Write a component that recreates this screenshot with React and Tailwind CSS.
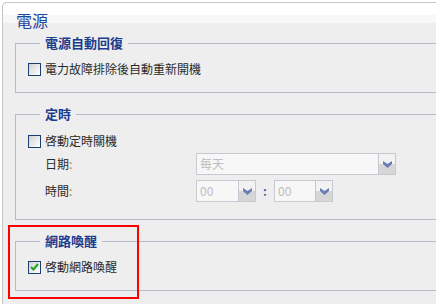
import { useState } from 'react';

const font = { fontFamily: '"Noto Sans CJK TC", "Noto Sans", sans-serif' };

function Checkbox({ checked, onChange }) {
    return (
        <button
            type="button"
            onClick={onChange}
            className="w-[13px] h-[13px] border border-[#1c406e] bg-[linear-gradient(135deg,#d2d2d2,#ffffff)] flex items-center justify-center shrink-0"
        >
            {checked && (
                <svg width="9" height="8" viewBox="0 0 9 8">
                    <path d="M1 4 L3.5 6.5 L8 1" fill="none" stroke="#21a321" strokeWidth="2" />
                </svg>
            )}
        </button>
    );
}

function Arrow() {
    return (
        <div className="w-[17px] self-stretch border-l border-[#c8c8d2] flex flex-col relative">
            <div className="flex-1 bg-[#f2f2f2]" />
            <div className="flex-1 bg-[#d6d6d6]" />
            <svg className="absolute left-[4px] top-[7px]" width="9" height="7" viewBox="0 0 9 7">
                <path d="M0 0 L4.5 3 L9 0 L9 3 L4.5 7 L0 3 Z" fill="#6c7cb4" />
            </svg>
        </div>
    );
}

function Select({ value, width }) {
    return (
        <div className={`${width} h-[22px] border border-[#c9c9d3] bg-[#f7f7f7] flex items-stretch`}>
            <div className="flex-1 flex items-center pl-[3px] text-[12px] text-[#bdbdbd]">{value}</div>
            <Arrow />
        </div>
    );
}

function Group({ title, children, className }) {
    return (
        <fieldset className={`border border-[#b7bbc5] pl-[12px] ${className}`}>
            <legend className="ml-[12px] px-[5px] text-[13px] leading-[16px] font-bold text-[#1b3d8f]">{title}</legend>
            {children}
        </fieldset>
    );
}

export default function App() {
    const [autoRestart, setAutoRestart] = useState(false);
    const [schedule, setSchedule] = useState(false);
    const [wol, setWol] = useState(true);

    return (
        <div className="w-[436px] h-[304px] overflow-hidden bg-white relative" style={font}>
            <div className="ml-[2px] mt-[2px] w-[520px] h-[320px] border-l border-t border-[#c6c6c6] rounded-tl-[5px] bg-[linear-gradient(#ffffff_0,#ffffff_12px,#f7f7f7_12px,#f7f7f7_20px,#eeeeee_20px)]">
                <div className="pl-[13px] pt-[8px] text-[16px] leading-[18px] text-[#2148a0]">電源</div>

                <div className="ml-[12px] mt-[6px] text-[12px] text-[#2a2a2a]">
                    <Group title="電源自動回復" className="pt-[8px] pb-[13px]">
                        <label className="h-[20px] flex items-center gap-[4px]">
                            <Checkbox checked={autoRestart} onChange={() => setAutoRestart(!autoRestart)} />
                            <span>電力故障排除後自動重新開機</span>
                        </label>
                    </Group>

                    <Group title="定時" className="mt-[13px] pt-[9px] pb-[17px]">
                        <label className="h-[20px] flex items-center gap-[4px]">
                            <Checkbox checked={schedule} onChange={() => setSchedule(!schedule)} />
                            <span>啓動定時關機</span>
                        </label>
                        <div className="mt-[2px] flex items-center">
                            <span className="w-[168px] pl-[17px]">日期<span className="text-[#b07a2a]">:</span></span>
                            <Select value="每天" width="w-[200px]" />
                        </div>
                        <div className="mt-[5px] flex items-center">
                            <span className="w-[168px] pl-[17px]">時間<span className="text-[#b07a2a]">:</span></span>
                            <Select value="00" width="w-[60px]" />
                            <span className="w-[18px] text-center font-bold text-[#4a6aa8]">:</span>
                            <Select value="00" width="w-[59px]" />
                        </div>
                    </Group>

                    <Group title="網路喚醒" className="mt-[13px] pt-[8px] pb-[13px]">
                        <label className="h-[20px] flex items-center gap-[4px]">
                            <Checkbox checked={wol} onChange={() => setWol(!wol)} />
                            <span>啓動網路喚醒</span>
                        </label>
                    </Group>
                </div>
            </div>

            <div className="absolute left-[8px] top-[225px] w-[131px] h-[74px] border-2 border-[#ff0000]" />
        </div>
    );
}
